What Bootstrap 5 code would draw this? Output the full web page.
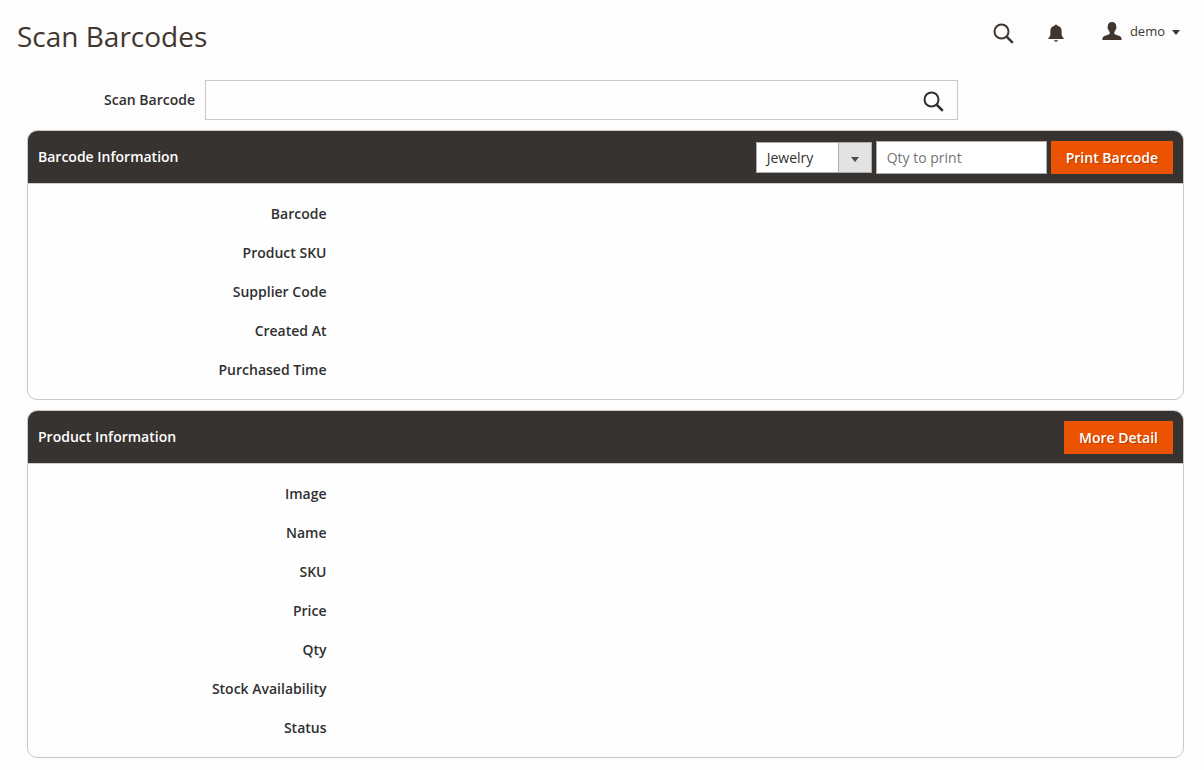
<!DOCTYPE html>
<html lang="en">
<head>
<meta charset="utf-8">
<meta name="viewport" content="width=device-width, initial-scale=1">
<title>Scan Barcodes</title>
<link href="https://cdn.jsdelivr.net/npm/bootstrap@5.3.0/dist/css/bootstrap.min.css" rel="stylesheet">
<style>
  body { font-family: "Open Sans", sans-serif; font-size: 14px; line-height: 19px; color: #303030; background: #fdfdfd; }
  .page-header { padding: 17px 24px 0 17px; }
  .page-title { font-size: 28px; font-weight: 400; line-height: 38px; color: #41362f; }
  .header-tools { gap: 34px; height: 32px; color: #41362f; }
  .header-tools .btn { color: inherit; }
  .user-menu { font-size: 13px; line-height: 18px; gap: 8px; margin-left: 4px; padding-bottom: 4px !important; }
  .user-menu .caret { margin: 3px 0 0 -1px; }
  .scan-row { margin-top: 25px; gap: 10px; }
  .scan-label { width: 195px; font-weight: 600; padding-bottom: 2px; }
  .scan-box { width: 62.5%; height: 40px; background: #fefefe; border: 1px solid #c8c8c8; }
  .scan-box .form-control { background: transparent; box-shadow: none; }
  .scan-box .btn { padding: 2px 13px 0; color: #303030; }
  .panels { padding: 10px 20px 12px 27px; gap: 10px; }
  .panel { border: 1px solid #c8c8c8; border-radius: 10px; background: #fefefe; overflow: hidden; }
  .panel-head { min-height: 53px; padding: 8px 10px; background: #373330; border-bottom: 1px solid #ccc; }
  .panel-title { font-size: 14px; line-height: 19px; font-weight: 600; color: #fff; margin-top: 8px; }
  .panel-tools { gap: 4px; padding-top: 2px; }
  .panel-body { padding: 10px 0 10px 13px; }
  .panel-body dt { padding: 10px 0; font-weight: 600; }
  .template-select { width: 116px; height: 31px; padding: 0 42px 0 8px; text-indent: 2px; border: 1px solid #adadad; border-radius: 0; font-size: 14px; line-height: 19px; color: #303030; margin-top: 1px;
    background: #fff url("data:image/svg+xml,%3Csvg xmlns='http://www.w3.org/2000/svg' width='33' height='29'%3E%3Cpath fill='%23e3e3e3' d='M0 0h33v29H0z'/%3E%3Cpath fill='%23adadad' d='M0 0h1v29H0z'/%3E%3Cpath fill='%23514943' d='M13 14h8l-4 5z'/%3E%3C/svg%3E") right 0 top 0 / 33px 29px no-repeat; }
  .qty-input { width: 171px; height: 33px; padding: 0 10px; border: 1px solid #adadad; border-radius: 0; font-size: 14px; color: #303030; }
  .qty-input::placeholder { color: #757575; }
  .btn-action { height: 33px; padding: 0 15px; border: 0; border-radius: 0; background: #eb5202; color: #fff; font-size: 14px; line-height: 19px; font-weight: 600; text-shadow: 1px 1px 0 rgba(0,0,0,.25); }
  .btn-action:hover { background: #ba4000; color: #fff; }
</style>
</head>
<body>
<header class="page-header d-flex justify-content-between align-items-start">
  <h1 class="page-title m-0">Scan Barcodes</h1>
  <div class="header-tools d-flex align-items-center">
    <button type="button" class="btn p-0 border-0 d-flex" aria-label="Search">
      <svg width="21" height="21" viewBox="0 0 21 21" fill="none" stroke="currentColor"><circle cx="8.500" cy="8.500" r="7" stroke-width="2"/><path d="M13.500 13.500l6.300 6.300" stroke-width="2.500"/></svg>
    </button>
    <button type="button" class="btn bell-icon p-0 border-0 d-flex" aria-label="Notifications">
      <svg width="16" height="18" viewBox="0 0 16 18" fill="currentColor"><path d="M7 1.500a1 1 0 0 1 2 0c2.900.5 4.600 2.500 4.600 5v3.500c0 1.700.7 2.800 2 4.100V15H.4v-.9c1.300-1.300 2-2.400 2-4.100V6.500c0-2.500 1.700-4.500 4.600-5zM6 16.200h4a2 1.500 0 0 1-4 0z"/></svg>
    </button>
    <button type="button" class="btn user-menu p-0 border-0 d-flex align-items-center">
      <svg width="20" height="18" viewBox="0 0 20 18" fill="currentColor"><path d="M10 0c2.900 0 4.300 1.900 4.300 4.400 0 .8.300 1.200 0 2-.2.700-.6.900-.8 1.500-.3.900-.8 1.500-1.200 2v1.500c.5 1.300 2.400 1.500 4.600 2.300C19 14.400 19.500 15.300 19.700 18H.3c.2-2.700.7-3.600 2.800-4.300 2.200-.8 4.100-1 4.600-2.300V9.900c-.4-.5-.9-1.100-1.200-2-.2-.6-.6-.8-.8-1.500-.3-.8 0-1.200 0-2C5.700 1.900 7.100 0 10 0z"/></svg>
      <span>demo</span>
      <svg class="caret" width="8" height="5" viewBox="0 0 8 5" fill="currentColor"><path d="M0 0h8L4 5z"/></svg>
    </button>
  </div>
</header>
<main>
  <form class="scan-row d-flex align-items-center">
    <label class="scan-label text-end flex-shrink-0" for="scan">Scan Barcode</label>
    <div class="scan-box d-flex">
      <input type="text" class="form-control border-0 rounded-0" id="scan">
      <button type="button" class="btn border-0 rounded-0 d-flex align-items-center" aria-label="Find barcode">
        <svg width="21" height="21" viewBox="0 0 21 21" fill="none" stroke="currentColor"><circle cx="8.500" cy="8.500" r="7" stroke-width="2"/><path d="M13.500 13.500l6.300 6.300" stroke-width="2.500"/></svg>
      </button>
    </div>
  </form>
  <div class="panels d-flex flex-column">
    <section class="panel">
      <div class="panel-head d-flex justify-content-between align-items-start">
        <h2 class="panel-title mb-0">Barcode Information</h2>
        <div class="panel-tools d-flex align-items-start">
          <select class="form-select template-select" aria-label="Barcode template"><option>Jewelry</option></select>
          <input type="text" class="form-control qty-input" placeholder="Qty to print" aria-label="Qty to print">
          <button type="button" class="btn btn-action text-nowrap">Print Barcode</button>
        </div>
      </div>
      <dl class="panel-body m-0">
        <dt class="col-3 text-end">Barcode</dt>
        <dt class="col-3 text-end">Product SKU</dt>
        <dt class="col-3 text-end">Supplier Code</dt>
        <dt class="col-3 text-end">Created At</dt>
        <dt class="col-3 text-end">Purchased Time</dt>
      </dl>
    </section>
    <section class="panel">
      <div class="panel-head d-flex justify-content-between align-items-start">
        <h2 class="panel-title mb-0">Product Information</h2>
        <div class="panel-tools d-flex align-items-start">
          <button type="button" class="btn btn-action text-nowrap">More Detail</button>
        </div>
      </div>
      <dl class="panel-body m-0">
        <dt class="col-3 text-end">Image</dt>
        <dt class="col-3 text-end">Name</dt>
        <dt class="col-3 text-end">SKU</dt>
        <dt class="col-3 text-end">Price</dt>
        <dt class="col-3 text-end">Qty</dt>
        <dt class="col-3 text-end">Stock Availability</dt>
        <dt class="col-3 text-end">Status</dt>
      </dl>
    </section>
  </div>
</main>
<script src="https://cdn.jsdelivr.net/npm/bootstrap@5.3.0/dist/js/bootstrap.bundle.min.js"></script>
</body>
</html>
